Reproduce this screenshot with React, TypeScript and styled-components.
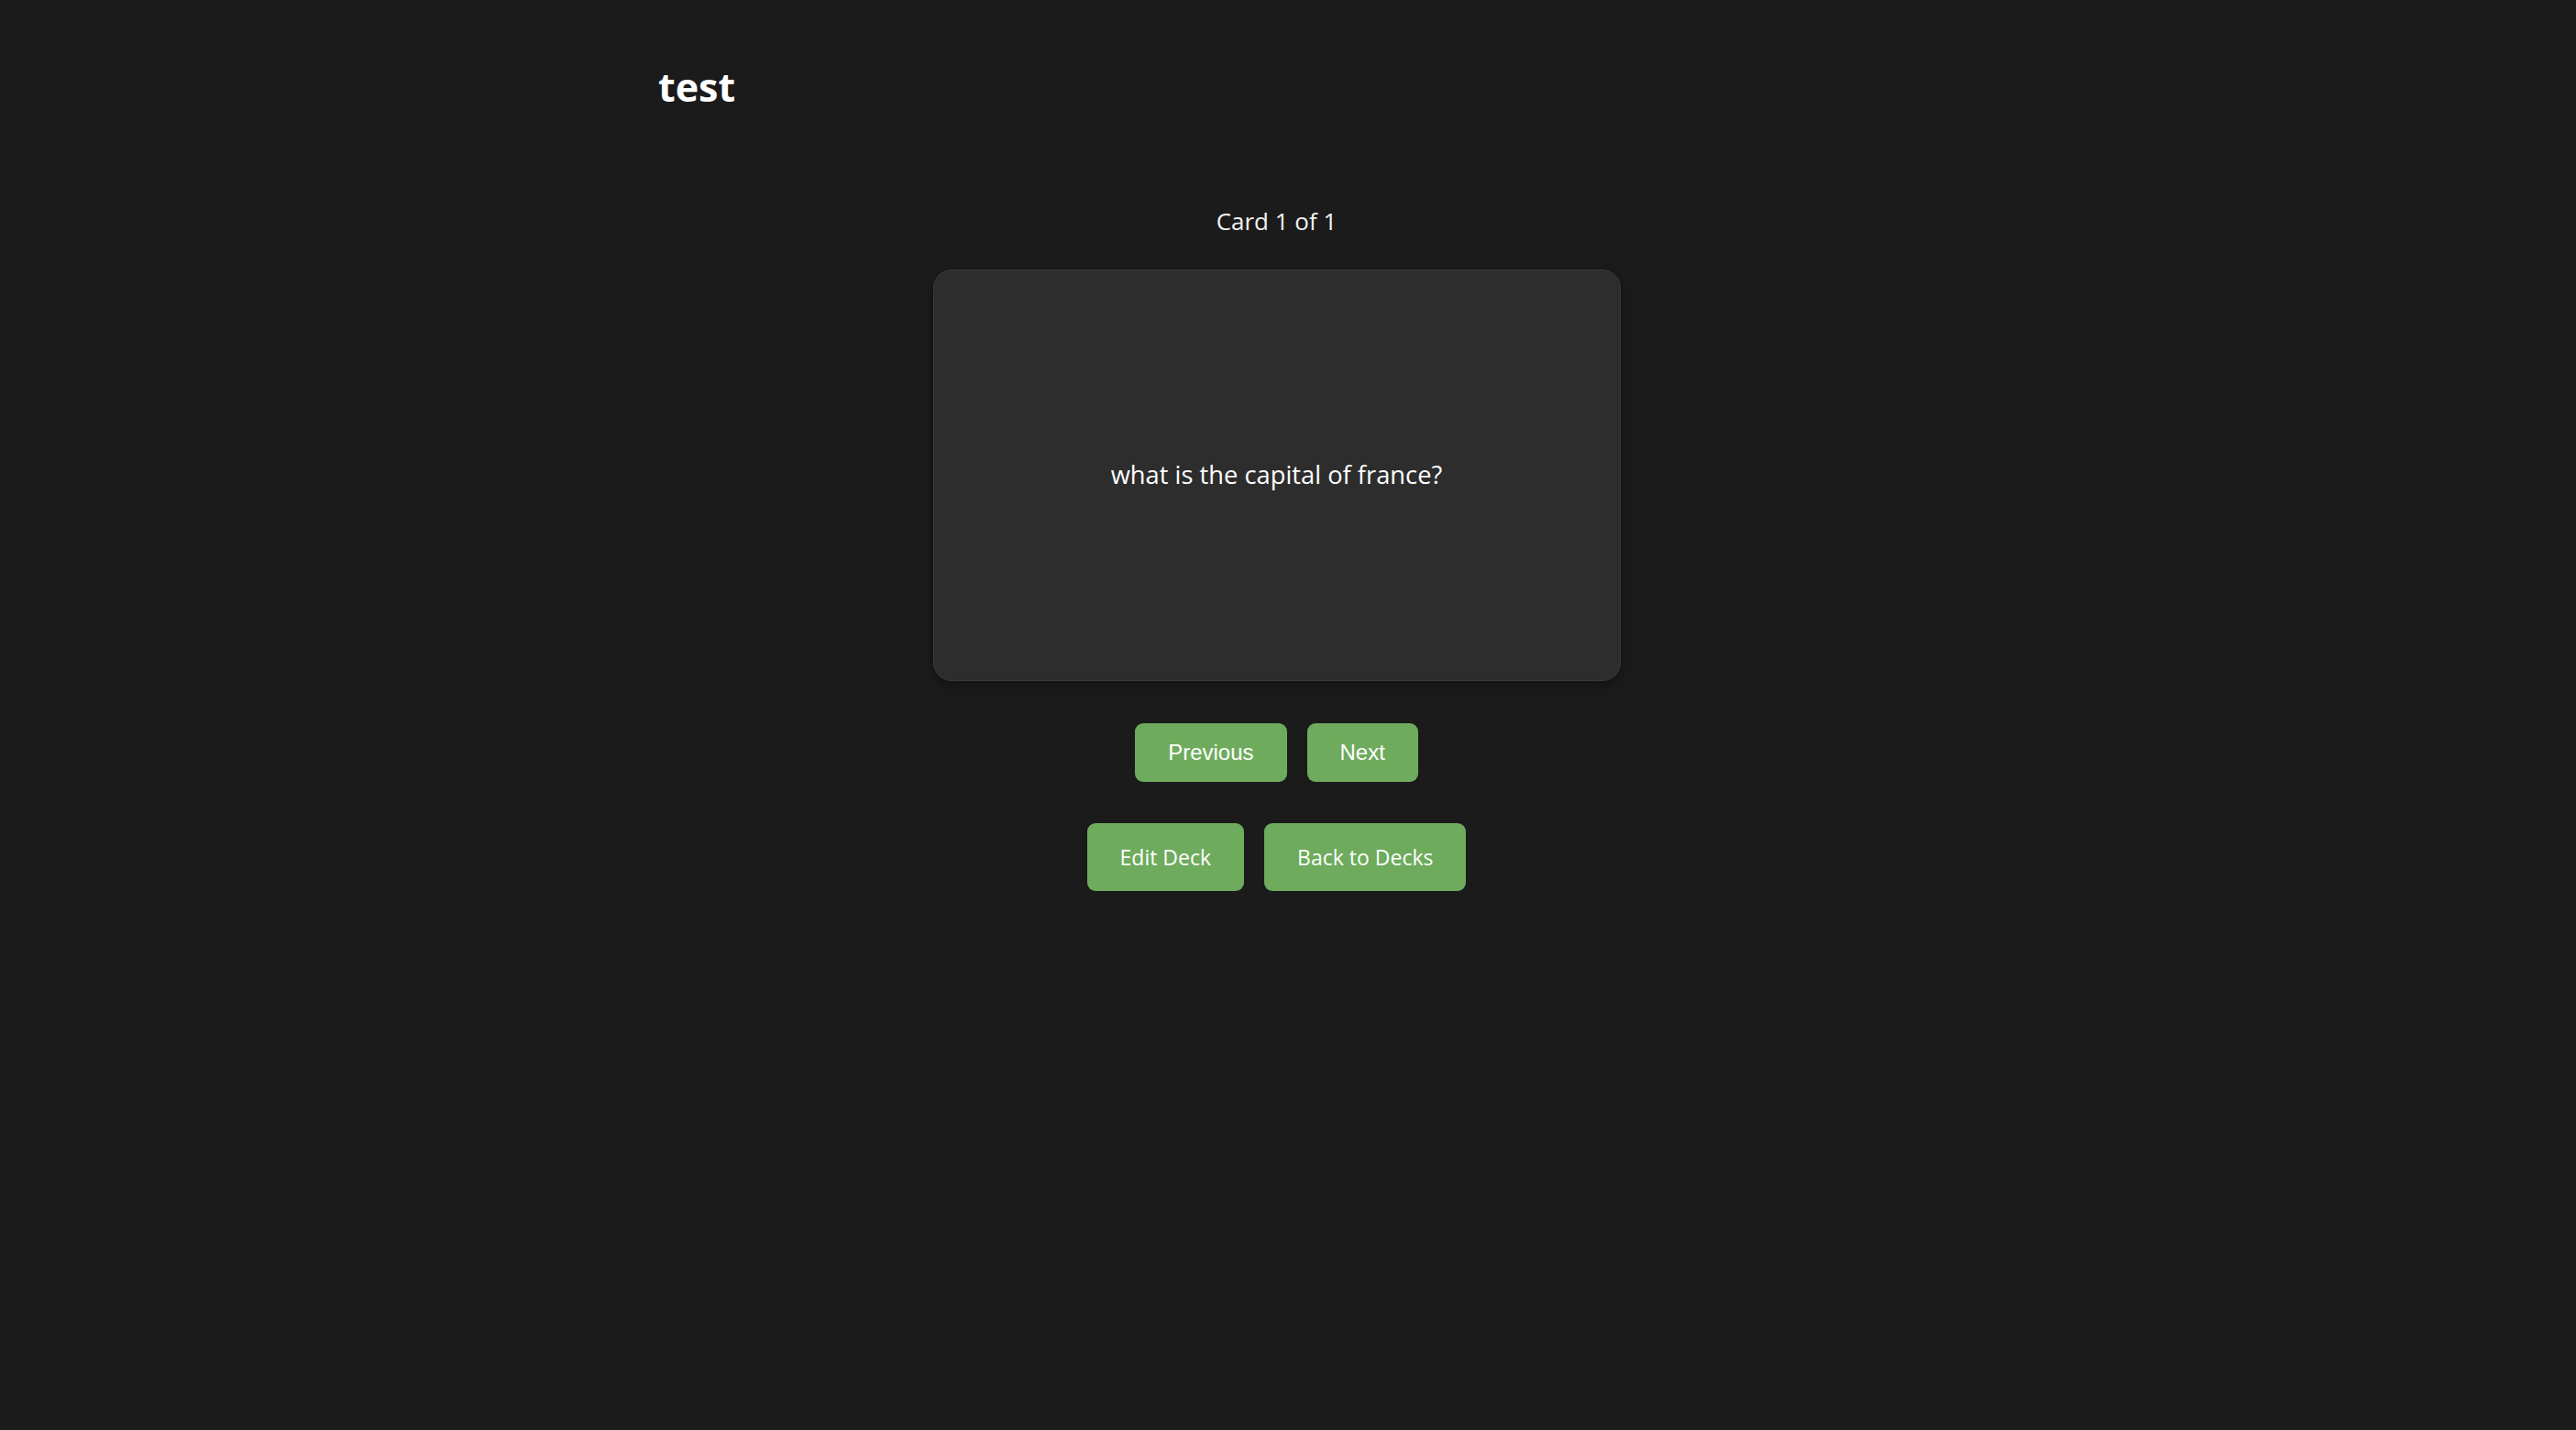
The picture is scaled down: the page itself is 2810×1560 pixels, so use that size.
import React from 'react';
import styled, { createGlobalStyle } from 'styled-components';

const GlobalStyle = createGlobalStyle`
  html, body {
    margin: 0;
    padding: 0;
    background: #1b1b1b;
  }
  body {
    font-family: 'Segoe UI', 'Open Sans', 'Noto Sans', sans-serif;
    color: #ffffff;
  }
`;

const Page = styled.div`
  min-height: 1560px;
  padding-right: 25px;
  box-sizing: border-box;
`;

const Container = styled.main`
  max-width: 1433px;
  margin: 0 auto;
  padding: 36px;
  box-sizing: border-box;
`;

const DeckTitle = styled.h1`
  margin: 33px 0 0;
  padding-left: 6px;
  font-size: 43px;
  line-height: 1.2;
  font-weight: 700;
  color: #ffffff;
`;

const Study = styled.section`
  display: flex;
  flex-direction: column;
  align-items: center;
  margin-top: 103px;
`;

const Counter = styled.p`
  margin: 0 0 36px;
  font-size: 26px;
  line-height: 34px;
  color: #f2f2f2;
`;

const Card = styled.div`
  width: 750px;
  height: 449px;
  box-sizing: border-box;
  display: flex;
  align-items: center;
  justify-content: center;
  padding: 36px;
  background: #2d2d2d;
  border: 1px solid #3a3a3a;
  border-radius: 20px;
  box-shadow: 0 4px 12px rgba(0, 0, 0, 0.35);
  cursor: pointer;
`;

const Question = styled.p`
  margin: 0;
  font-size: 27.3px;
  line-height: 1.4;
  text-align: center;
  color: #ffffff;
`;

const ButtonRow = styled.div<{ $gap?: number }>`
  display: flex;
  justify-content: center;
  gap: 22px;
  margin-top: ${p => p.$gap ?? 46}px;
`;

const NavButton = styled.button`
  height: 64px;
  padding: 0 36px;
  font-family: 'Liberation Sans', Arial, sans-serif;
  font-size: 24px;
  color: #ffffff;
  background: #6eab5d;
  border: none;
  border-radius: 9px;
  cursor: pointer;
`;

const ActionButton = styled.button`
  height: 74px;
  padding: 0 36px;
  font-family: 'Segoe UI', 'Open Sans', 'Noto Sans', sans-serif;
  font-size: 23px;
  color: #ffffff;
  background: #6eab5d;
  border: none;
  border-radius: 9px;
  cursor: pointer;
`;

export default function App() {
  return (
    <Page>
      <GlobalStyle />
      <Container>
        <DeckTitle>test</DeckTitle>
        <Study>
          <Counter>Card 1 of 1</Counter>
          <Card>
            <Question>what is the capital of france?</Question>
          </Card>
          <ButtonRow>
            <NavButton>Previous</NavButton>
            <NavButton>Next</NavButton>
          </ButtonRow>
          <ButtonRow $gap={45}>
            <ActionButton>Edit Deck</ActionButton>
            <ActionButton>Back to Decks</ActionButton>
          </ButtonRow>
        </Study>
      </Container>
    </Page>
  );
}
